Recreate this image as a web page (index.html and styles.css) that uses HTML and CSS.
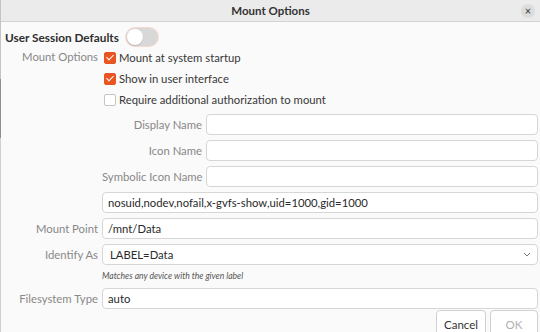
FILE: index.html
```html
<!DOCTYPE html>
<html lang="en">
<head>
    <meta charset="UTF-8">
    <meta name="viewport" content="width=device-width, initial-scale=1.0">
    <title>Mount Options</title>
    <link rel="stylesheet" href="styles.css">
</head>
<body>

<div class="window">
    <header class="titlebar">
        <span class="title">Mount Options</span>
        <span class="close">&#215;</span>
    </header>

    <main class="content">
        <div class="session-row">
            <span class="section-title">User Session Defaults</span>
            <span class="switch"><span class="knob"></span></span>
        </div>

        <div class="form">
            <div class="label label-top">Mount Options</div>
            <div class="options">
                <label class="check-row"><span class="check on"></span>Mount at system startup</label>
                <label class="check-row"><span class="check on"></span>Show in user interface</label>
                <label class="check-row"><span class="check"></span>Require additional authorization to mount</label>

                <div class="names">
                    <div class="label">Display Name</div>
                    <div class="field"></div>
                    <div class="label">Icon Name</div>
                    <div class="field"></div>
                    <div class="label">Symbolic Icon Name</div>
                    <div class="field"></div>
                </div>

                <div class="field">nosuid,nodev,nofail,x-gvfs-show,uid=1000,gid=1000</div>
            </div>

            <div class="label">Mount Point</div>
            <div class="field">/mnt/Data</div>

            <div class="label">Identify As</div>
            <div class="field combo">
                <span>LABEL=Data</span>
                <svg class="chevron" width="8" height="5" viewBox="0 0 8 5"><polyline points="1,1 4,4 7,1" fill="none" stroke="#777" stroke-width="1"/></svg>
            </div>

            <div></div>
            <div class="hint">Matches any device with the given label</div>

            <div class="label">Filesystem Type</div>
            <div class="field">auto</div>
        </div>

        <div class="actions">
            <button class="btn btn-cancel">Cancel</button>
            <button class="btn btn-ok" disabled>OK</button>
        </div>
    </main>
</div>

</body>
</html>
```

FILE: styles.css
```css
body {
    margin: 0;
    font-family: Lato, "Noto Sans", sans-serif;
    font-size: 11.3px;
    color: #3d3d3d;
    background: #fafafa;
    overflow: hidden;
}

.window {
    height: 332px;
    background: #fafafa;
    border-left: 1px solid #b8b8b8;
    border-image: linear-gradient(to bottom, #c4c4c4 0, #c4c4c4 80px, #8e8e8e 80px, #8e8e8e 138px, #cfcfcf 138px) 1;
    overflow: hidden;
}

.titlebar {
    height: 21px;
    background: #ebebeb;
    border-bottom: 1px solid #d3d3d3;
    display: flex;
    align-items: center;
    justify-content: center;
    position: relative;
}

.title {
    font-weight: bold;
    color: #333;
    font-size: 11.5px;
}

.close {
    position: absolute;
    right: 5px;
    top: 4px;
    width: 14px;
    height: 14px;
    border-radius: 50%;
    background: #dcdcdc;
    color: #333;
    font-size: 11px;
    line-height: 14px;
    text-align: center;
}

.content {
    padding: 6px 2px 0 4px;
}

.session-row {
    display: flex;
    align-items: center;
    gap: 7px;
    height: 18px;
}

.section-title {
    font-weight: bold;
    font-size: 11.8px;
    color: #2e2e2e;
}

.switch {
    width: 32px;
    height: 18px;
    border-radius: 9px;
    background: #d8d8d8;
    box-shadow: 0 0 0 1px rgba(233, 84, 32, 0.2);
    display: flex;
    align-items: center;
    padding-left: 1px;
    box-sizing: border-box;
}

.knob {
    width: 16px;
    height: 16px;
    border-radius: 50%;
    background: #fff;
    box-shadow: 0 1px 1px rgba(0, 0, 0, 0.15);
}

.form {
    margin-top: 1px;
    display: grid;
    grid-template-columns: 93px 1fr;
    column-gap: 4px;
    row-gap: 5px;
    align-items: center;
}

.label {
    color: #888;
    text-align: right;
    white-space: nowrap;
}

.label-top {
    align-self: start;
    line-height: 19px;
}

.check-row {
    display: flex;
    align-items: center;
    height: 21px;
    padding-left: 2px;
    gap: 3px;
    color: #383838;
}

.check {
    width: 10px;
    height: 10px;
    border: 1px solid #c4c4c4;
    border-radius: 2px;
    background: #fff;
    position: relative;
}

.check.on {
    background: #e95420;
    border-color: #e95420;
}

.check.on::after {
    content: "";
    position: absolute;
    left: 3px;
    top: 0;
    width: 3px;
    height: 6px;
    border: solid #fff;
    border-width: 0 1.5px 1.5px 0;
    transform: rotate(45deg);
}

.names {
    margin-top: 4px;
    margin-bottom: 5px;
    display: grid;
    grid-template-columns: 100px 1fr;
    column-gap: 4px;
    row-gap: 5px;
    align-items: center;
}

.field {
    height: 21px;
    box-sizing: border-box;
    border: 1px solid #d6d6d6;
    border-radius: 4px;
    background: #fff;
    padding: 0 5px;
    display: flex;
    align-items: center;
    color: #2a2a2a;
    white-space: nowrap;
}

.combo {
    justify-content: space-between;
    padding-left: 7px;
    padding-right: 6px;
}

.hint {
    font-size: 8.6px;
    font-style: italic;
    color: #555;
    height: 13px;
    line-height: 13px;
}

.actions {
    display: flex;
    justify-content: flex-end;
    gap: 4px;
    margin-top: 1px;
}

.btn {
    font-family: inherit;
    font-size: 11.5px;
    color: #333;
    background: #fff;
    border: 1px solid #d0d0d0;
    border-radius: 4px;
    height: 28px;
    padding: 0;
}

.btn-cancel {
    width: 50px;
}

.btn-ok {
    width: 48px;
}

.btn:disabled {
    color: #b0b0b0;
}
```
